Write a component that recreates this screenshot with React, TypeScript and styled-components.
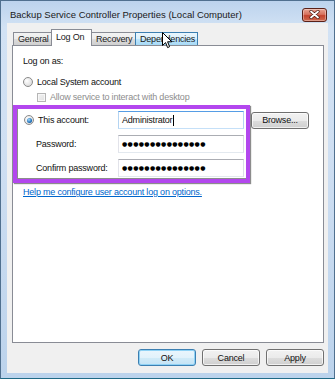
import styled, { createGlobalStyle, css } from 'styled-components';

const GlobalStyle = createGlobalStyle`
    html, body {
        margin: 0;
        padding: 0;
        background: #ffffff;
    }
    * {
        box-sizing: border-box;
    }
`

const Window = styled.div`
    position: relative;
    width: 335px;
    height: 379px;
    display: flex;
    flex-direction: column;
    padding: 0 6px 6px 6px;
    border: 1px solid #50708f;
    border-bottom-color: #1f6a86;
    background: linear-gradient(180deg, #bcd3ed 0%, #d2e2f4 7%, #cfdff2 40%, #bcd3ec 100%);
    font-family: "Liberation Sans", Arial, sans-serif;
    font-size: 9px;
    color: #111;
`

const TitleBar = styled.div`
    height: 22px;
    flex: 0 0 auto;
    display: flex;
    align-items: center;
    justify-content: space-between;
    padding: 5px 1px 0 3px;
`

const TitleText = styled.span`
    font-size: 9.5px;
    color: #1a1a1a;
`

const CloseButton = styled.div`
    width: 25px;
    height: 14px;
    border: 1px solid #5a2118;
    border-radius: 3px;
    background: linear-gradient(180deg, #e8a493 0%, #d7725e 45%, #c4432e 55%, #cf6a4f 100%);
    box-shadow: inset 0 0 0 1px rgba(255, 255, 255, 0.35);
    display: flex;
    align-items: center;
    justify-content: center;
`

const Client = styled.div`
    flex: 1;
    display: flex;
    flex-direction: column;
    background: #f0f0f0;
    padding: 6px 4px 7px 5px;
    letter-spacing: -0.2px;
`

const TabStrip = styled.div`
    display: flex;
    align-items: flex-end;
    height: 16px;
    padding-left: 1px;
    position: relative;
    z-index: 1;
`

const Tab = styled.div<{ $width: number; $state?: 'selected' | 'hover' }>`
    width: ${({ $width }) => $width}px;
    height: 13px;
    display: flex;
    align-items: center;
    padding-left: 4px;
    border: 1px solid #898c95;
    border-bottom: none;
    margin-right: -1px;
    background: linear-gradient(180deg, #f3f3f3 0%, #ebebeb 50%, #dddddd 51%, #cfcfcf 100%);
    color: #1a1a1a;
    ${({ $state }) => $state === 'selected' && css`
        height: 17px;
        margin-bottom: -1px;
        padding-bottom: 2px;
        background: #ffffff;
        position: relative;
        z-index: 2;
    `}
    ${({ $state }) => $state === 'hover' && css`
        border-color: #3c7fb1;
        background: linear-gradient(180deg, #eaf6fd 0%, #d9f0fc 50%, #bee6fd 51%, #a7d9f5 100%);
        position: relative;
        z-index: 2;
    `}
`

const Panel = styled.div`
    height: 298px;
    flex: 0 0 auto;
    background: #ffffff;
    border: 1px solid #898c95;
    display: flex;
    flex-direction: column;
    padding: 9px 0 0 10px;
    line-height: 12px;
`

const Line = styled.div<{ $gap?: number; $muted?: boolean }>`
    display: flex;
    align-items: center;
    gap: 4px;
    height: 12px;
    margin-top: ${({ $gap }) => $gap ?? 0}px;
    color: ${({ $muted }) => ($muted ? '#8d8d8d' : '#111')};
`

const Indent = styled.div`
    padding-left: 14px;
`

const Radio = styled.span<{ $checked?: boolean }>`
    width: 10px;
    height: 10px;
    border-radius: 50%;
    border: 1px solid #8a8a8a;
    background: radial-gradient(circle at 35% 35%, #ffffff 0%, #e4e4e4 60%, #cfcfcf 100%);
    display: inline-flex;
    align-items: center;
    justify-content: center;
    flex: 0 0 auto;
    &::after {
        content: '';
        width: 5px;
        height: 5px;
        border-radius: 50%;
        background: radial-gradient(circle at 40% 35%, #a7dcff 0%, #1d6fb8 60%, #0d4a88 100%);
        display: ${({ $checked }) => ($checked ? 'block' : 'none')};
    }
`

const CheckBox = styled.span`
    width: 9px;
    height: 9px;
    border: 1px solid #b5b5b5;
    background: linear-gradient(135deg, #f3f3f3 0%, #e0e0e0 100%);
    box-shadow: inset 0 0 0 1px #f7f7f7;
    flex: 0 0 auto;
`

const Highlight = styled.div`
    width: 237px;
    height: 78px;
    margin: 2px 0 0 -10px;
    border: 4px solid #b347ee;
    box-shadow: inset 1px -1px 0 #8c8c8c, 1px 1px 1px rgba(0, 0, 0, 0.45);
    padding: 2px 0 0 7px;
    display: flex;
    flex-direction: column;
    gap: 6px;
`

const FieldRow = styled.div`
    display: grid;
    grid-template-columns: 87px 126px 57px;
    column-gap: 7px;
    align-items: center;
    width: 291px;
    height: 18px;
`

const FieldLabel = styled.div<{ $indent?: number }>`
    display: flex;
    align-items: center;
    gap: 4px;
    padding-left: ${({ $indent }) => $indent ?? 0}px;
`

const TextBox = styled.div<{ $focused?: boolean }>`
    height: 18px;
    border: 1px solid #abadb3;
    border-color: #abadb3 #dbdfe6 #e3e9ef #e2e3ea;
    background: #ffffff;
    display: flex;
    align-items: center;
    padding-left: 3px;
    white-space: nowrap;
    overflow: hidden;
    ${({ $focused }) => $focused && css`
        border-color: #569de5 #b4d4f2 #c5e0f8 #b4d4f2;
    `}
`

const Caret = styled.span`
    width: 1px;
    height: 11px;
    background: #000;
    margin-left: 1px;
`

const Dots = styled.span`
    font-family: "DejaVu Sans", sans-serif;
    font-size: 6px;
    letter-spacing: 0.35px;
    color: #000;
`

const Button = styled.div<{ $default?: boolean }>`
    height: 17px;
    width: 58px;
    border: 1px solid #707070;
    border-radius: 3px;
    background: linear-gradient(180deg, #f2f2f2 0%, #ebebeb 50%, #dddddd 51%, #cfcfcf 100%);
    box-shadow: inset 0 0 0 1px rgba(255, 255, 255, 0.7);
    display: flex;
    align-items: center;
    justify-content: center;
    color: #111;
    ${({ $default }) => $default && css`
        border-color: #3c7fb1;
        box-shadow: inset 0 0 0 1px #8fd2f5;
        background: linear-gradient(180deg, #eaf6fd 0%, #e2f2fb 50%, #d1ebf8 51%, #c4e3f5 100%);
    `}
`

const Link = styled.a`
    margin-top: 3px;
    height: 12px;
    color: #0066cc;
    text-decoration: underline;
    cursor: pointer;
`

const ButtonBar = styled.div`
    display: flex;
    justify-content: flex-end;
    gap: 6px;
    margin-top: 6px;
`

const Pointer = styled.svg`
    position: absolute;
    left: 161px;
    top: 31px;
    z-index: 5;
`

const tabs = [
    { label: 'General', width: 39 },
    { label: 'Log On', width: 41, state: 'selected' as const },
    { label: 'Recovery', width: 45 },
    { label: 'Dependencies', width: 63, state: 'hover' as const },
]

const DOTS = '●'.repeat(15)

export default function App() {
    return (
        <>
            <GlobalStyle />
            <Window>
                <TitleBar>
                    <TitleText>Backup Service Controller Properties (Local Computer)</TitleText>
                    <CloseButton>
                        <svg width="11" height="9" viewBox="0 0 11 9">
                            <path d="M2 1.5 L9 7.5 M9 1.5 L2 7.5" stroke="#4a1a12" strokeWidth="3.2" strokeLinecap="round" />
                            <path d="M2 1.5 L9 7.5 M9 1.5 L2 7.5" stroke="#ffffff" strokeWidth="1.8" strokeLinecap="round" />
                        </svg>
                    </CloseButton>
                </TitleBar>
                <Client>
                    <TabStrip>
                        {tabs.map((t) => (
                            <Tab key={t.label} $width={t.width} $state={t.state}>{t.label}</Tab>
                        ))}
                    </TabStrip>
                    <Panel>
                        <Line>Log on as:</Line>
                        <Line $gap={9}>
                            <Radio />
                            Local System account
                        </Line>
                        <Indent>
                            <Line $gap={3} $muted>
                                <CheckBox />
                                Allow service to interact with desktop
                            </Line>
                        </Indent>
                        <Highlight>
                            <FieldRow>
                                <FieldLabel>
                                    <Radio $checked />
                                    This account:
                                </FieldLabel>
                                <TextBox $focused>Administrator<Caret /></TextBox>
                                <Button>Browse...</Button>
                            </FieldRow>
                            <FieldRow>
                                <FieldLabel $indent={12}>Password:</FieldLabel>
                                <TextBox><Dots>{DOTS}</Dots></TextBox>
                            </FieldRow>
                            <FieldRow>
                                <FieldLabel $indent={12}>Confirm password:</FieldLabel>
                                <TextBox><Dots>{DOTS}</Dots></TextBox>
                            </FieldRow>
                        </Highlight>
                        <Link>Help me configure user account log on options.</Link>
                    </Panel>
                    <ButtonBar>
                        <Button $default>OK</Button>
                        <Button>Cancel</Button>
                        <Button>Apply</Button>
                    </ButtonBar>
                </Client>
                <Pointer width="11" height="17" viewBox="0 0 11 17">
                    <path d="M0.5 0.5 L0.5 13.5 L3.6 10.6 L5.6 15.6 L7.6 14.7 L5.6 9.8 L9.8 9.8 Z" fill="#ffffff" stroke="#000000" strokeWidth="1" strokeLinejoin="round" />
                </Pointer>
            </Window>
        </>
    )
}
